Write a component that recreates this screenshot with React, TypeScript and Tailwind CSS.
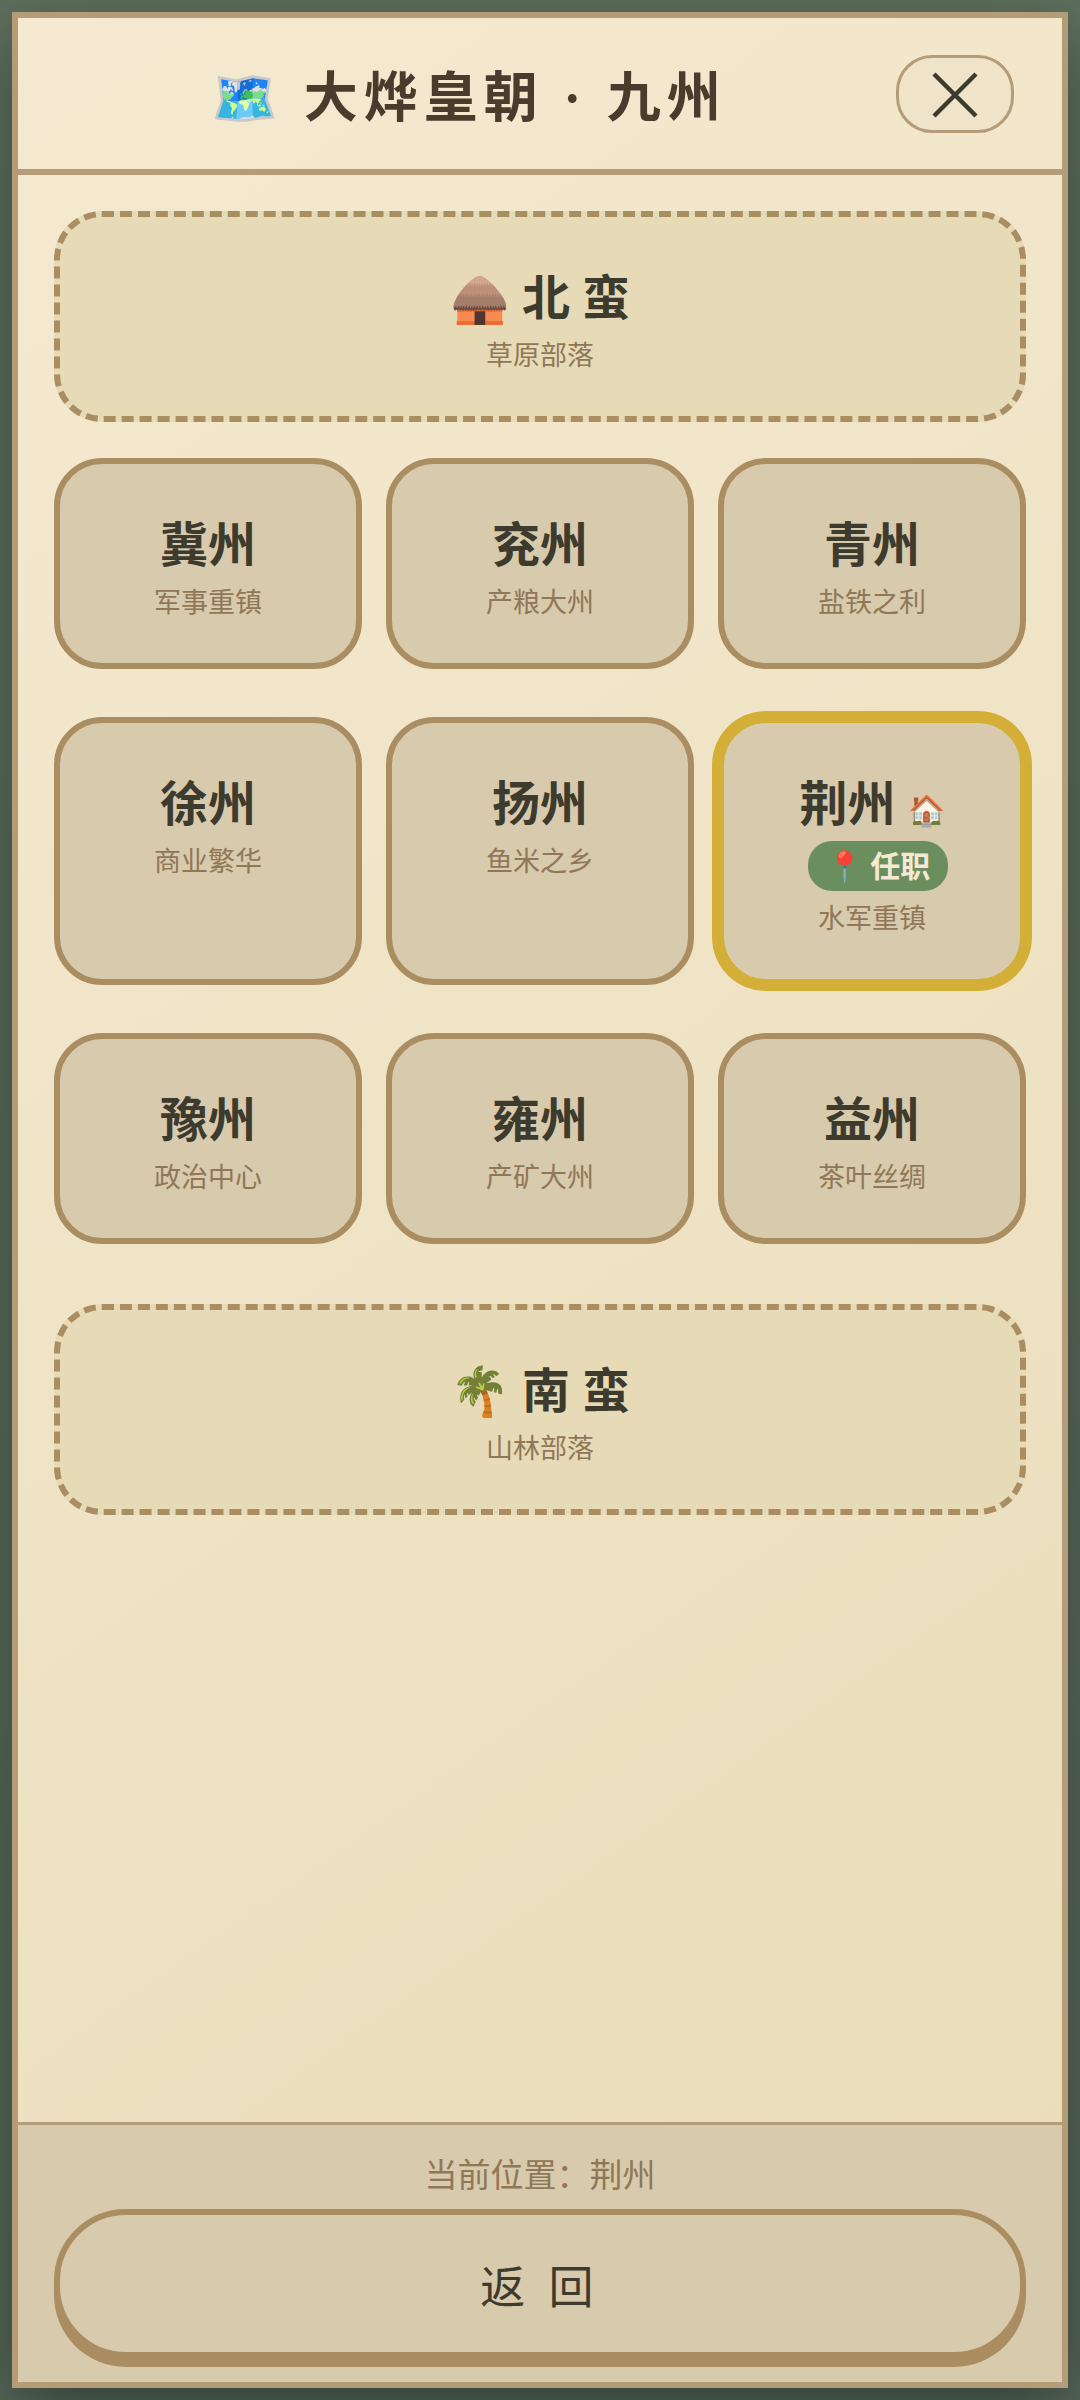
import clsx from "clsx";

type Region = {
  name: string;
  note: string;
  current?: boolean;
};

const regions: Region[] = [
  { name: "冀州", note: "军事重镇" },
  { name: "兖州", note: "产粮大州" },
  { name: "青州", note: "盐铁之利" },
  { name: "徐州", note: "商业繁华" },
  { name: "扬州", note: "鱼米之乡" },
  { name: "荆州", note: "水军重镇", current: true },
  { name: "豫州", note: "政治中心" },
  { name: "雍州", note: "产矿大州" },
  { name: "益州", note: "茶叶丝绸" },
];

function TribeCard({ name, note }: Region) {
  return (
    <button
      type="button"
      className="flex w-full flex-col items-center rounded-[48px] border-6 border-dashed border-[#ab8d62] bg-[#e7dbb7] px-6 pt-[46px] pb-[39px]"
    >
      <span className="text-[48px] leading-[72px] font-bold text-[#3d3a2e]">{name}</span>
      <span className="text-[27px] leading-[42px] text-[#8f7757]">{note}</span>
    </button>
  );
}

function RegionCard({ name, note, current }: Region) {
  return (
    <button
      type="button"
      className={clsx(
        "flex flex-col items-center rounded-[48px] border-6 bg-[#d8caac] px-6 pt-[46px] pb-[39px]",
        current ? "border-[#d3af37] ring-6 ring-[#d3af37]" : "border-[#ab8d62]",
      )}
    >
      <span className="text-[48px] leading-[72px] font-bold text-[#3d3a2e]">
        {name}
        {current && <span className="ml-3 text-[30px] leading-none">🏠</span>}
      </span>
      {current && (
        <span className="mb-[7px] ml-3 rounded-3xl bg-[#6b8e5f] px-[18px] pt-[2px] text-[30px] leading-[48px] font-bold text-[#f5e9d3]">
          📍 任职
        </span>
      )}
      <span className="text-[27px] leading-[42px] text-[#8f7757]">{note}</span>
    </button>
  );
}

function CloseIcon() {
  return (
    <svg viewBox="0 0 46 46" className="mt-[2px] size-[46px]" fill="none" stroke="currentColor" strokeWidth="4.5">
      <path d="M2 2 44 44M44 2 2 44" />
    </svg>
  );
}

export default function App() {
  return (
    <div className="flex min-h-screen flex-col bg-linear-to-b from-[#5f705e] to-[#566858] p-3 font-['Liberation_Serif','Noto_Sans_CJK_SC',serif]">
      <div className="flex flex-1 flex-col border-6 border-[#b59c78] bg-linear-[145deg] from-[#f5ead1] to-[#e8dcb8] shadow-[0_24px_72px_rgba(0,0,0,0.4)]">
        <header className="flex items-center gap-3 border-b-6 border-[#b59c78] py-9 pr-12 pl-9">
          <h1 className="flex-1 pt-3 text-center text-[54px] leading-[67px] font-bold tracking-[6px] text-[#4a3c2c]">
            🗺️ 大烨皇朝 · 九州
          </h1>
          <button
            type="button"
            aria-label="关闭"
            className="flex h-[78px] w-[118px] items-center justify-center rounded-[36px] border-3 border-[#b59c78] bg-[#efe3ca] text-[#3d3a2e]"
          >
            <CloseIcon />
          </button>
        </header>

        <main className="flex-1 p-9">
          <TribeCard name="🛖 北 蛮" note="草原部落" />
          <div className="mt-9 mb-15 grid grid-cols-3 gap-x-6 gap-y-12">
            {regions.map((region) => (
              <RegionCard key={region.name} {...region} />
            ))}
          </div>
          <TribeCard name="🌴 南 蛮" note="山林部落" />
        </main>

        <footer className="border-t-3 border-[#b59c78] bg-[#d8caac] px-9 pt-[27px] pb-6">
          <p className="mb-[9px] text-center text-[33px] leading-[48px] text-[#8f7757]">当前位置：荆州</p>
          <button
            type="button"
            className="block w-full rounded-[72px] border-6 border-[#ab8d62] bg-[#d8caac] pt-[42px] pb-[30px] text-[45px] leading-[65px] tracking-[6px] text-[#3d3a2e] shadow-[0_9px_0_#ab8d62]"
          >
            返 回
          </button>
        </footer>
      </div>
    </div>
  );
}
